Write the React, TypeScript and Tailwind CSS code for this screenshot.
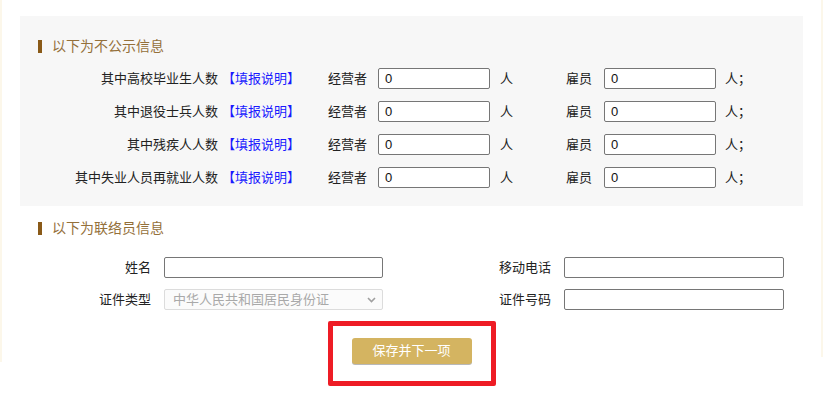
import React from "react";

const font = { fontFamily: '"Liberation Sans", "Noto Sans CJK SC", sans-serif' };

function Heading({ text }: { text: string }) {
  return (
    <div className="flex items-center h-[14px] pl-[18px]">
      <span className="w-[4px] h-[13px] bg-[#8a5a18]" />
      <span className="ml-[10px] text-[14px] leading-[14px] text-[#94703a]">{text}</span>
    </div>
  );
}

function NumInput() {
  return (
    <div className="w-[112px] h-[21px] border border-[#767676] rounded-[2px] bg-white flex items-center pl-[6px] text-[13px] text-[#111]">
      0
    </div>
  );
}

const rows = ["其中高校毕业生人数", "其中退役士兵人数", "其中残疾人人数", "其中失业人员再就业人数"];

export default function App() {
  return (
    <div style={font} className="w-[823px] h-[393px] bg-white flex items-start text-[13px] text-[#222] overflow-hidden">
      <div className="w-[2px] h-[362px] bg-[#fcf7ea]" />
      <div className="w-[819px] flex flex-col">
        <div className="ml-[18px] mt-[16px] w-[783px] bg-[#f7f7f7] pt-[23px] pb-[18px] flex flex-col">
          <Heading text="以下为不公示信息" />
          <div className="mt-[15px] flex flex-col gap-[12px]">
            {rows.map((r) => (
              <div key={r} className="flex items-center h-[21px]">
                <span className="w-[198px] text-right whitespace-nowrap">{r}</span>
                <span className="ml-[4px] w-[106px] text-[#1a1aff] whitespace-nowrap">【填报说明】</span>
                <span className="w-[50px] whitespace-nowrap">经营者</span>
                <NumInput />
                <span className="ml-[10px] w-[66px]">人</span>
                <span className="w-[38px] whitespace-nowrap">雇员</span>
                <NumInput />
                <span className="ml-[9px] whitespace-nowrap">人；</span>
              </div>
            ))}
          </div>
        </div>
        <div className="mt-[15px] pl-[18px]">
          <Heading text="以下为联络员信息" />
        </div>
        <div className="mt-[22px] flex flex-col gap-[11px]">
          <div className="flex items-center h-[21px]">
            <span className="w-[149px] text-right">姓名</span>
            <div className="ml-[13px] w-[219px] h-[21px] border border-[#767676] rounded-[2px] bg-white" />
            <span className="w-[168px] text-right">移动电话</span>
            <div className="ml-[13px] w-[220px] h-[21px] border border-[#767676] rounded-[2px] bg-white" />
          </div>
          <div className="flex items-center h-[21px]">
            <span className="w-[149px] text-right">证件类型</span>
            <div className="ml-[13px] w-[219px] h-[21px] border border-[#dcdcdc] rounded-[2px] bg-[#fbfbfb] flex items-center pl-[8px] pr-[6px] text-[#a9a9a9]">
              <span className="flex-1 whitespace-nowrap">中华人民共和国居民身份证</span>
              <svg width="9" height="6" viewBox="0 0 9 6" fill="none">
                <path d="M1 1l3.5 3.5L8 1" stroke="#a0a0a0" strokeWidth="1.6" />
              </svg>
            </div>
            <span className="w-[168px] text-right">证件号码</span>
            <div className="ml-[13px] w-[220px] h-[21px] border border-[#767676] rounded-[2px] bg-white" />
          </div>
        </div>
        <div className="mt-[11px] flex justify-center">
          <div className="border-[5px] border-[#ee1c25] rounded-[2px] pt-[12px] pb-[17px] px-[19px]">
            <button className="w-[120px] h-[26px] rounded-[3px] bg-[#d4b461] text-white text-[13px] shadow-[0_1px_0_#b8b8b8] flex items-center justify-center" style={font}>
              保存并下一项
            </button>
          </div>
        </div>
      </div>
      <div className="w-[2px] h-[357px] bg-[#fcf7ea]" />
    </div>
  );
}
